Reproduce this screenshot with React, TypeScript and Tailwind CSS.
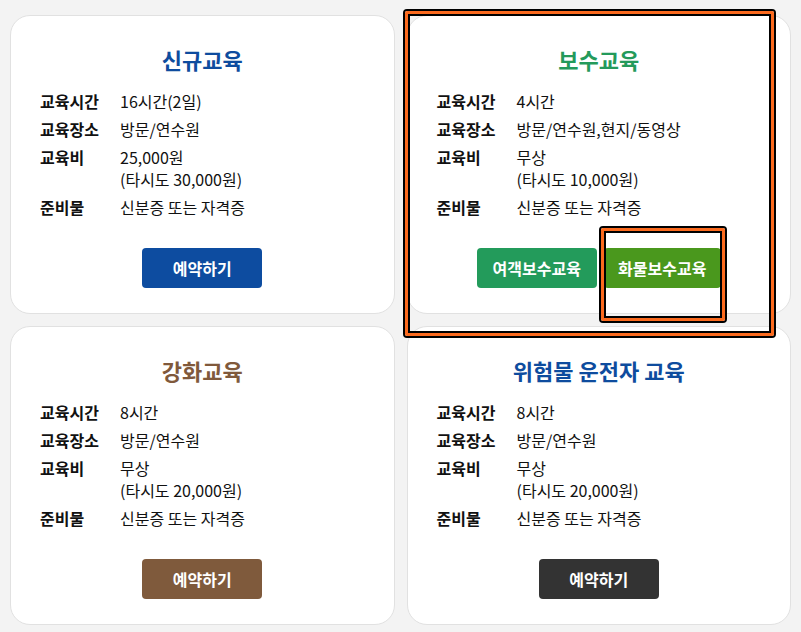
import React from "react";

// 교육 항목 타입
interface InfoRow {
  label: string;
  value: string[];
}

interface Course {
  title: string;
  titleClass: string;
  rows: InfoRow[];
  buttons: { text: string; className: string }[];
}

const courses: Course[] = [
  {
    title: "신규교육",
    titleClass: "text-[#0e4c9e]",
    rows: [
      { label: "교육시간", value: ["16시간(2일)"] },
      { label: "교육장소", value: ["방문/연수원"] },
      { label: "교육비", value: ["25,000원", "(타시도 30,000원)"] },
      { label: "준비물", value: ["신분증 또는 자격증"] },
    ],
    buttons: [{ text: "예약하기", className: "w-[120px] bg-[#0d4ca0]" }],
  },
  {
    title: "보수교육",
    titleClass: "text-[#249a5b]",
    rows: [
      { label: "교육시간", value: ["4시간"] },
      { label: "교육장소", value: ["방문/연수원,현지/동영상"] },
      { label: "교육비", value: ["무상", "(타시도 10,000원)"] },
      { label: "준비물", value: ["신분증 또는 자격증"] },
    ],
    buttons: [
      { text: "여객보수교육", className: "w-[120px] bg-[#239b5b]" },
      { text: "화물보수교육", className: "w-[117px] bg-[#4a981d]" },
    ],
  },
  {
    title: "강화교육",
    titleClass: "text-[#80593b]",
    rows: [
      { label: "교육시간", value: ["8시간"] },
      { label: "교육장소", value: ["방문/연수원"] },
      { label: "교육비", value: ["무상", "(타시도 20,000원)"] },
      { label: "준비물", value: ["신분증 또는 자격증"] },
    ],
    buttons: [{ text: "예약하기", className: "w-[120px] bg-[#7f5a3c]" }],
  },
  {
    title: "위험물 운전자 교육",
    titleClass: "text-[#0e4c9e]",
    rows: [
      { label: "교육시간", value: ["8시간"] },
      { label: "교육장소", value: ["방문/연수원"] },
      { label: "교육비", value: ["무상", "(타시도 20,000원)"] },
      { label: "준비물", value: ["신분증 또는 자격증"] },
    ],
    buttons: [{ text: "예약하기", className: "w-[120px] bg-[#333333]" }],
  },
];

function CourseCard({ course }: { course: Course }) {
  return (
    <div className="flex h-[299px] flex-col rounded-[20px] border border-[#e1e1e1] bg-white px-[29px] pt-[28px]">
      <h2 className={`text-center text-[22px] font-bold leading-[30px] ${course.titleClass}`}>
        {course.title}
      </h2>
      <dl className="mt-[16px] flex flex-col gap-[6px] text-[16px] leading-[22px] text-[#111]">
        {course.rows.map((row) => (
          <div key={row.label} className="flex">
            <dt className="w-[80px] shrink-0 font-bold">{row.label}</dt>
            <dd>
              {row.value.map((v) => (
                <div key={v}>{v}</div>
              ))}
            </dd>
          </div>
        ))}
      </dl>
      <div className="mt-[30px] flex justify-center gap-[7px]">
        {course.buttons.map((b) => (
          <button
            key={b.text}
            className={`h-[40px] rounded-[4px] text-[16px] font-bold text-white ${b.className}`}
          >
            {b.text}
          </button>
        ))}
      </div>
    </div>
  );
}

export default function App() {
  return (
    <div
      className="relative h-[632px] w-[801px] overflow-hidden bg-[#f3f3f3] px-[10px] pt-[15px]"
      style={{ fontFamily: '"Noto Sans CJK KR", "Noto Sans", sans-serif' }}
    >
      <div className="grid grid-cols-2 gap-3">
        {courses.map((c) => (
          <CourseCard key={c.title} course={c} />
        ))}
      </div>

      {/* 강조 표시 박스 */}
      <div className="pointer-events-none absolute left-[405px] top-[11px] h-[325px] w-[369px] rounded-[2px] border-[3px] border-[#fb6a1e] shadow-[inset_0_0_0_2px_#000] ring-2 ring-black" />
      <div className="pointer-events-none absolute left-[601px] top-[228px] h-[93px] w-[124px] rounded-[2px] border-[3px] border-[#fb6a1e] shadow-[inset_0_0_0_2px_#000] ring-2 ring-black" />
    </div>
  );
}
